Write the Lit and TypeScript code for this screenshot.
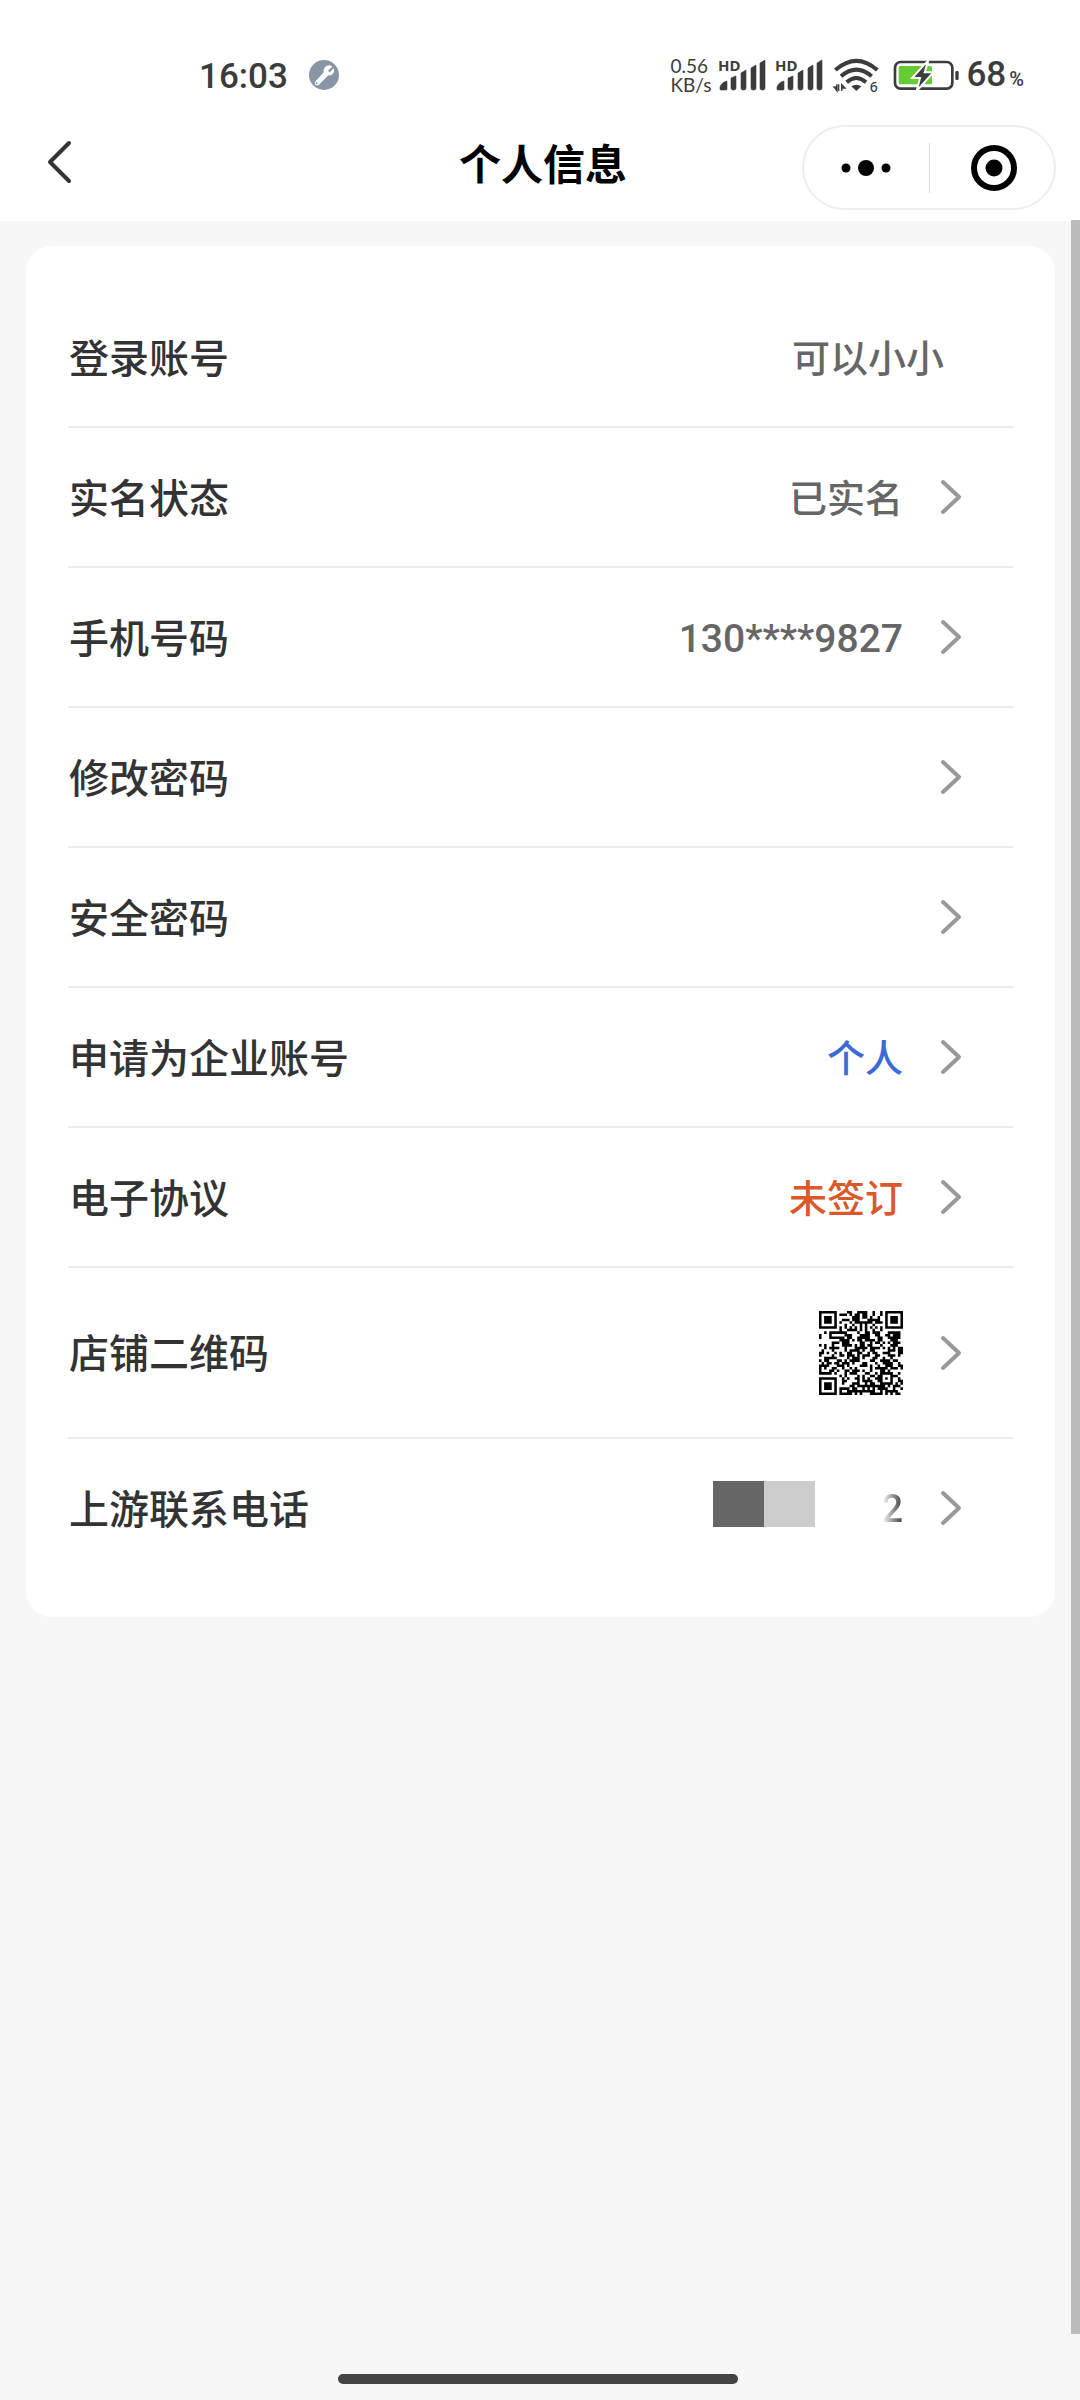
import { LitElement, html, svg, css, nothing } from "lit";
import { customElement, property } from "lit/decorators.js";
import { classMap } from "lit/directives/class-map.js";

interface InfoItem {
  label: string;
  value?: string;
  tone?: "link" | "warn" | "number";
  kind?: "plain" | "qr" | "masked";
}

const ITEMS: InfoItem[] = [
  { label: "登录账号", value: "可以小小", kind: "plain" },
  { label: "实名状态", value: "已实名" },
  { label: "手机号码", value: "130****9827", tone: "number" },
  { label: "修改密码" },
  { label: "安全密码" },
  { label: "申请为企业账号", value: "个人", tone: "link" },
  { label: "电子协议", value: "未签订", tone: "warn" },
  { label: "店铺二维码", kind: "qr" },
  { label: "上游联系电话", value: "2", kind: "masked" },
];

const QR_SIZE = 33;

/* Finder squares, timing lines and one alignment square around a seeded fill. */
function qrPath(): string {
  let seed = 20483;
  const next = () => {
    seed = (seed * 1103515245 + 12345) % 2147483648;
    return seed / 2147483648;
  };
  const ring = (x: number, y: number, cx: number, cy: number) =>
    Math.max(Math.abs(x - cx), Math.abs(y - cy));
  const far = QR_SIZE - 4;
  let d = "";
  for (let y = 0; y < QR_SIZE; y++) {
    for (let x = 0; x < QR_SIZE; x++) {
      let on = next() > 0.48;
      if (x === 6 || y === 6) on = (x + y) % 2 === 0;
      const align = ring(x, y, 26, 26);
      if (align <= 2) on = align !== 1;
      for (const [cx, cy] of [[3, 3], [far, 3], [3, far]]) {
        const r = ring(x, y, cx, cy);
        if (r <= 4) on = r === 3 || r <= 1;
      }
      if (on) d += `M${x} ${y}h1v1h-1z`;
    }
  }
  return d;
}

@customElement("status-bar")
export class StatusBar extends LitElement {
  static styles = css`
    :host {
      display: block;
      color: #3c3c3c;
      font-family: Roboto, "Noto Sans CJK SC", sans-serif;
    }
    .bar {
      display: flex;
      align-items: center;
      justify-content: space-between;
      height: 78px;
      padding: 36px 56px 0 199px;
    }
    .group {
      display: flex;
      align-items: center;
    }
    .time {
      padding-top: 3px;
      font-size: 35px;
      font-weight: 500;
      line-height: 40px;
      margin-right: 21px;
    }
    .speed {
      display: flex;
      flex-direction: column;
      font-family: Lato, sans-serif;
      font-size: 19px;
      line-height: 19px;
      margin-right: 7px;
    }
    .signal {
      margin-right: 8px;
    }
    .wifi {
      margin: 0 12px 0 2px;
    }
    .battery {
      margin-right: 6px;
    }
    svg {
      display: block;
      overflow: visible;
    }
    .hd {
      font: 700 15px "Noto Sans", sans-serif;
    }
    .six {
      font: 500 42px "Noto Sans", sans-serif;
    }
    .level {
      display: flex;
      align-items: baseline;
      padding-top: 3px;
      font-size: 35px;
      font-weight: 500;
      line-height: 40px;
    }
    .percent {
      font-size: 20px;
      margin-left: 3px;
    }
  `;

  private signal() {
    return html`<svg class="signal" width="49" height="30" viewBox="0 0 49 30" fill="#3c3c3c" aria-hidden="true">
      <text class="hd" x="0" y="11">HD</text>
      <path d="M2 28c0-3 3-6 7-7v8q0 1-1 1H3q-1 0-1-1zM13 18l5-2v12q0 2-2 2h-1q-2 0-2-2zM23 13l5-3v18q0 2-2 2h-1q-2 0-2-2zM33 8l5-3v23q0 2-2 2h-1q-2 0-2-2zM42 3l5-3v28q0 2-2 2h-1q-2 0-2-2z" stroke="#3c3c3c" stroke-width="0.6" />
    </svg>`;
  }

  render() {
    return html`<div class="bar">
      <div class="group">
        <span class="time">16:03</span>
        <svg width="30" height="30" viewBox="0 0 90 90" aria-hidden="true">
          <circle cx="45" cy="45" r="45" fill="#8795a4" />
          <path d="M70 20L58 31l1 4 4 1 11-11c5 11-3 23-16 21L30 74c-6 6-15 0-12-8l26-29C42 23 54 13 66 17" fill="#fff" />
          <circle cx="23" cy="70" r="3" fill="#8795a4" />
        </svg>
      </div>
      <div class="group">
        <span class="speed"><span>0.56</span><span>KB/s</span></span>
        ${this.signal()} ${this.signal()}
        <svg class="wifi" width="46" height="36" viewBox="0 0 138 108" aria-hidden="true">
          <g fill="none" stroke="#3c3c3c" stroke-width="12">
            <path d="M4 39Q67-16 130 39" />
            <path d="M21 58Q67 18 113 58" />
            <path d="M38 76Q67 50 96 76" />
          </g>
          <path d="M52 88Q67 78 82 88L67 102z" fill="#3c3c3c" />
          <path d="M9 82v20L0 90h5M14 82v20M23 102V83l10 10h-6" fill="#3c3c3c" stroke="#3c3c3c" stroke-width="4" />
          <text class="six" x="107" y="106" fill="#3c3c3c">6</text>
        </svg>
        <svg class="battery" width="68" height="32" viewBox="0 0 204 96" aria-hidden="true">
          <rect x="9" y="9" width="172" height="80" rx="17" fill="#fff" stroke="#3c3c3c" stroke-width="8" />
          <rect x="20" y="21" width="100" height="55" rx="5" fill="#66cc33" />
          <path d="M109 4L60 57h24l-10 39 50-56H98z" fill="#3c3c3c" stroke="#fff" stroke-width="6" />
          <rect x="190" y="36" width="10" height="27" rx="4" fill="#3c3c3c" />
        </svg>
        <span class="level">68<span class="percent">%</span></span>
      </div>
    </div>`;
  }
}

@customElement("nav-bar")
export class NavBar extends LitElement {
  @property() heading = "";

  static styles = css`
    :host {
      display: block;
    }
    .bar {
      display: grid;
      grid-template-columns: 1fr auto 1fr;
      align-items: center;
      height: 107px;
      padding: 0 24px 0 30px;
    }
    button {
      display: flex;
      align-items: center;
      justify-content: center;
      margin: 0;
      padding: 0;
      border: 0;
      background: none;
      cursor: pointer;
    }
    .back {
      width: 57px;
      height: 84px;
      padding-bottom: 12px;
    }
    .title {
      margin: 0;
      padding-bottom: 12px;
      color: #000;
      font: 700 42px/60px "Noto Sans CJK SC", sans-serif;
    }
    .capsule {
      box-sizing: border-box;
      justify-self: end;
      display: flex;
      align-items: center;
      width: 254px;
      height: 85px;
      border: 2px solid #eeeeee;
      border-radius: 43px;
    }
    .capsule button {
      width: 50%;
      height: 80px;
    }
    .capsule .close {
      padding-left: 4px;
    }
    .split {
      width: 1px;
      height: 50px;
      background: #d8d8d8;
    }
    svg {
      display: block;
    }
  `;

  render() {
    return html`<div class="bar">
      <button class="back" aria-label="返回">
        <svg width="26" height="44" viewBox="0 0 26 44" fill="none" stroke="#333" stroke-width="4" stroke-linecap="round" stroke-linejoin="round">
          <path d="M23 3L4 22l19 19" />
        </svg>
      </button>
      <h1 class="title">${this.heading}</h1>
      <div class="capsule">
        <button aria-label="更多">
          <svg width="50" height="18" viewBox="0 0 50 18">
            <circle cx="5" cy="9" r="4.5" /><circle cx="25" cy="9" r="8" /><circle cx="45" cy="9" r="4.5" />
          </svg>
        </button>
        <span class="split"></span>
        <button class="close" aria-label="关闭">
          <svg width="48" height="48" viewBox="0 0 48 48">
            <circle cx="24" cy="24" r="20" fill="none" stroke="#000" stroke-width="6" />
            <circle cx="24" cy="24" r="8.5" />
          </svg>
        </button>
      </div>
    </div>`;
  }
}

@customElement("info-row")
export class InfoRow extends LitElement {
  @property({ attribute: false }) item!: InfoItem;

  static styles = css`
    :host {
      display: block;
      border-bottom: 2px solid #ececec;
    }
    :host(:last-child) {
      border-bottom: 0;
    }
    .row {
      box-sizing: border-box;
      display: flex;
      align-items: center;
      min-height: 138px;
      padding: 0 51px 0 1px;
      color: #333;
      text-decoration: none;
      font: 500 40px/56px "Noto Sans CJK SC", sans-serif;
    }
    .row.plain {
      padding-right: 69px;
    }
    .row.qr {
      min-height: 169px;
    }
    .label {
      flex: 1;
      padding-bottom: 3px;
    }
    .value {
      display: flex;
      align-items: center;
      padding-bottom: 2px;
      color: #666;
      font-size: 38px;
    }
    .value.link {
      color: #3a6bd6;
    }
    .value.warn {
      color: #d9592a;
    }
    .value.number {
      padding: 4px 0 0;
      font-family: Roboto, sans-serif;
      font-size: 39px;
    }
    .arrow {
      display: block;
      margin-left: 37px;
    }
    .code {
      display: block;
    }
    .mask {
      display: flex;
      margin: 0 66px 6px 0;
    }
    .block {
      width: 51px;
      height: 46px;
      background: #cccccc;
    }
    .block.dark {
      background: #666666;
    }
    .faded {
      padding-top: 4px;
      font-family: Roboto, sans-serif;
      background: linear-gradient(90deg, #ffffff 5%, #555555 85%);
      background-clip: text;
      -webkit-background-clip: text;
      color: transparent;
    }
  `;

  private content() {
    const { kind, value, tone } = this.item;
    if (kind === "qr") {
      return html`<svg class="code" width="84" height="84" viewBox="0 0 33 33" role="img" aria-label="二维码">
        ${svg`<path d=${qrPath()} fill="#000" />`}
      </svg>`;
    }
    if (kind === "masked") {
      return html`<span class="value">
        <span class="mask"><span class="block dark"></span><span class="block"></span></span>
        <span class="faded">${value}</span>
      </span>`;
    }
    if (!value) return nothing;
    return html`<span class=${classMap({ value: true, link: tone === "link", warn: tone === "warn", number: tone === "number" })}>${value}</span>`;
  }

  render() {
    const { label, kind } = this.item;
    if (kind === "plain") {
      return html`<div class="row plain"><span class="label">${label}</span>${this.content()}</div>`;
    }
    return html`<a class=${classMap({ row: true, qr: kind === "qr" })} href="#">
      <span class="label">${label}</span>
      ${this.content()}
      <svg class="arrow" width="22" height="38" viewBox="0 0 22 38" fill="none" stroke="#999" stroke-width="4" stroke-linecap="round" stroke-linejoin="round" aria-hidden="true">
        <path d="M3 4l16 15L3 34" />
      </svg>
    </a>`;
  }
}

@customElement("app-root")
export class AppRoot extends LitElement {
  static styles = css`
    :host {
      display: block;
    }
    .page {
      position: relative;
      box-sizing: border-box;
      display: flex;
      flex-direction: column;
      min-height: 100vh;
      background: #f7f7f7;
    }
    .top {
      background: #fff;
    }
    .main {
      flex: 1;
      padding: 25px 25px 25px 26px;
    }
    .card {
      padding: 42px 42px 40px;
      border-radius: 26px;
      background: #fff;
    }
    .scroll {
      position: absolute;
      top: 220px;
      right: 0;
      bottom: 66px;
      width: 9px;
      background: #bbbbbb;
    }
    .home {
      align-self: center;
      width: 37%;
      height: 10px;
      margin: 0 4px 16px 0;
      border-radius: 5px;
      background: #444444;
    }
  `;

  render() {
    return html`<div class="page">
      <header class="top">
        <status-bar></status-bar>
        <nav-bar heading="个人信息"></nav-bar>
      </header>
      <main class="main">
        <section class="card">${ITEMS.map((item) => html`<info-row .item=${item}></info-row>`)}</section>
      </main>
      <div class="scroll"></div>
      <div class="home"></div>
    </div>`;
  }
}
